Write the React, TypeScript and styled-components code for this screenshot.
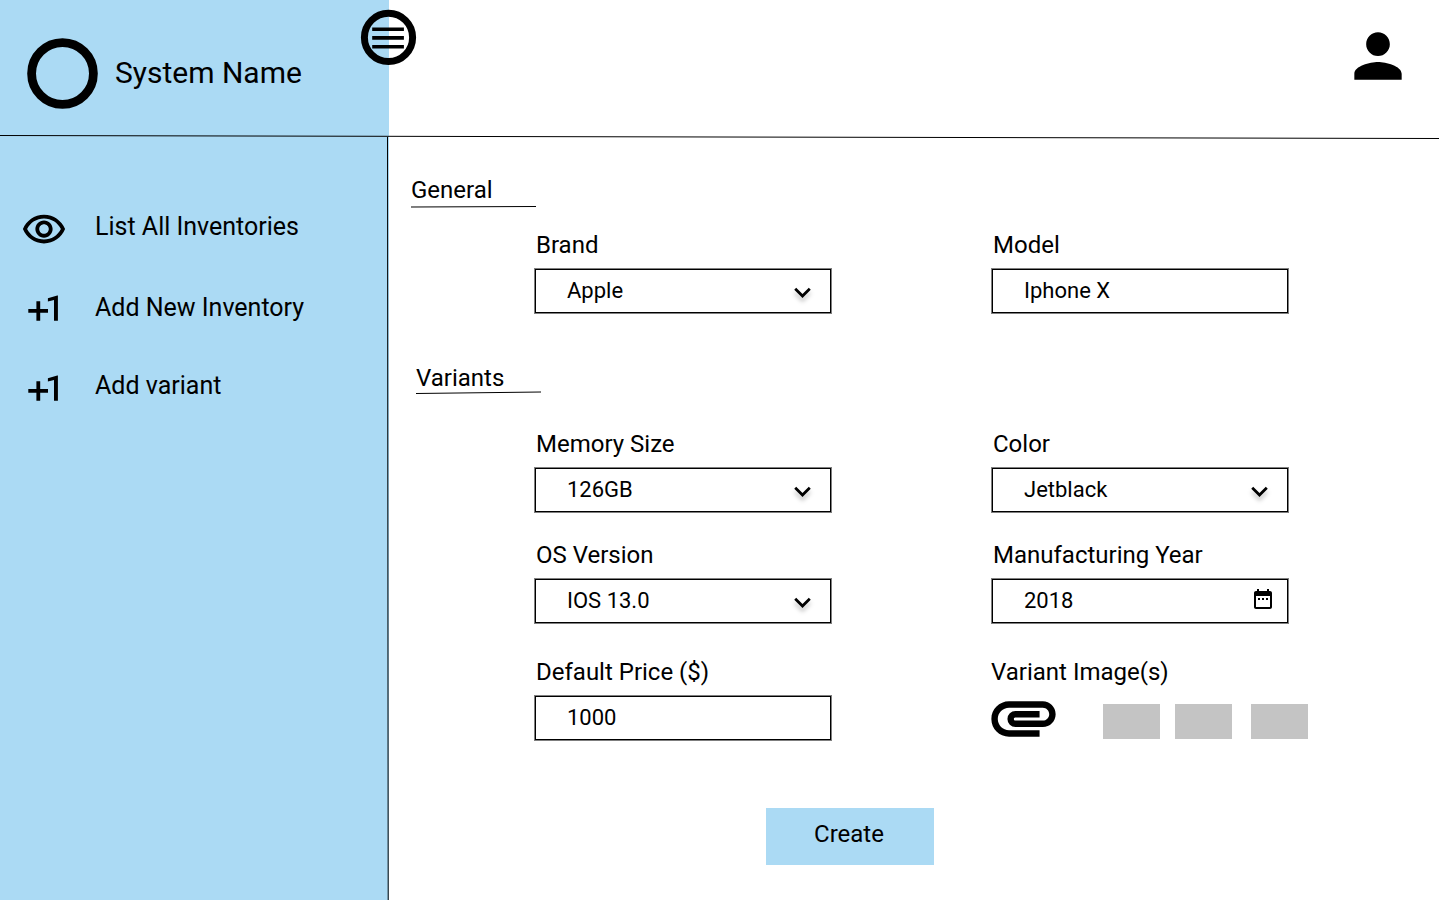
import React from 'react';
import styled, { createGlobalStyle } from 'styled-components';

const BLUE = '#abdaf4';

const GlobalStyle = createGlobalStyle`
  * { box-sizing: border-box; }
  html, body { margin: 0; background: #fff; overflow: hidden; }
  body { font-family: Roboto, sans-serif; color: #000; }
  svg { display: block; flex: none; }
`;

const Page = styled.div`
  position: relative;
  display: flex;
  width: 1440px;
  height: 900px;
  background: #fff;
`;

const Sidebar = styled.aside`
  display: flex;
  flex-direction: column;
  width: 389px;
  height: 900px;
  flex: none;
  background: ${BLUE};
`;

const Brand = styled.div`
  display: flex;
  height: 137px;
  padding: 38px 0 0 27px;
`;

const SystemName = styled.h1`
  margin: 17px 0 0 17px;
  font-size: 30px;
  line-height: 35px;
  font-weight: 400;
  white-space: nowrap;
`;

const Nav = styled.nav`
  display: flex;
  flex-direction: column;
  padding: 68px 0 0 21px;
`;

const NavItem = styled.a<{ $height: number }>`
  display: flex;
  height: ${(p) => p.$height}px;
`;

const NavIcon = styled.span<{ $top: number }>`
  width: 74px;
  padding-top: ${(p) => p.$top}px;
`;

const NavText = styled.span`
  padding-top: 7px;
  font-size: 25px;
  line-height: 29px;
  white-space: nowrap;
`;

const MenuButton = styled.button`
  position: absolute;
  left: 360px;
  top: 9px;
  padding: 0;
  border: 0;
  background: transparent;
`;

const Rules = styled.svg`
  position: absolute;
  left: 0;
  top: 0;
`;

const Main = styled.main`
  display: flex;
  flex-direction: column;
  width: 1051px;
`;

const TopBar = styled.header`
  display: flex;
  justify-content: flex-end;
  height: 137px;
  padding: 21px 27px 0 0;
`;

const Section = styled.section<{ $height: number; $top?: number }>`
  height: ${(p) => p.$height}px;
  padding-top: ${(p) => p.$top ?? 0}px;
`;

const SectionTitle = styled.h2<{ $indent: number }>`
  margin: 0 0 0 ${(p) => p.$indent}px;
  font-size: 24px;
  line-height: 28px;
  font-weight: 400;
`;

const Fields = styled.div<{ $top: number }>`
  display: grid;
  grid-template-columns: 296px 320px;
  column-gap: 161px;
  padding: ${(p) => p.$top}px 0 0 146px;
`;

const Field = styled.div<{ $height: number }>`
  display: flex;
  flex-direction: column;
  height: ${(p) => p.$height}px;
`;

const Label = styled.label<{ $indent?: number }>`
  margin: 0 0 10px ${(p) => p.$indent ?? 1}px;
  font-size: 24px;
  line-height: 28px;
  white-space: nowrap;
`;

const Box = styled.div<{ $end: number }>`
  display: flex;
  justify-content: space-between;
  width: 296px;
  height: 44px;
  padding: 0 ${(p) => p.$end}px 0 31px;
  border: 1px solid #000;
  box-shadow: 0 0 0 1px rgba(0, 0, 0, 0.5);
  font-size: 22px;
  line-height: 42px;
`;

const ChevronIcon = styled.svg`
  margin-top: 6px;
  filter: drop-shadow(0 4px 2px rgba(0, 0, 0, 0.25));
`;

const CalendarIcon = styled.svg`
  margin-top: 7px;
`;

const Attachments = styled.div`
  display: flex;
  align-items: flex-start;
  margin: 5px 0 0 -1px;
`;

const Thumb = styled.div<{ $gap: number }>`
  width: 57px;
  height: 35px;
  margin: 3px 0 0 ${(p) => p.$gap}px;
  background: #c4c4c4;
`;

const CreateButton = styled.button`
  width: 168px;
  height: 57px;
  margin-left: 377px;
  padding: 0 2px 5px 0;
  border: 0;
  background: ${BLUE};
  color: #000;
  font: 400 24px/28px Roboto, sans-serif;
`;

const Logo = () => (
  <svg width="71" height="71" viewBox="0 0 71 71" fill="none" stroke="#000">
    <circle cx="35.5" cy="35.5" r="30.9" strokeWidth="8.8" />
  </svg>
);

const Eye = () => (
  <svg width="46" height="46" viewBox="0 0 24 24">
    <path d="M12 6c3.79 0 7.17 2.13 8.82 5.5C19.17 14.87 15.79 17 12 17s-7.17-2.13-8.82-5.5C4.83 8.13 8.21 6 12 6m0-2C7 4 2.73 7.11 1 11.5 2.73 15.89 7 19 12 19s9.27-3.11 11-7.5C21.27 7.11 17 4 12 4zm0 5c1.38 0 2.5 1.12 2.5 2.5S13.38 14 12 14s-2.5-1.12-2.5-2.5S10.62 9 12 9m0-2c-2.48 0-4.5 2.02-4.5 4.5S9.52 16 12 16s4.5-2.02 4.5-4.5S14.48 7 12 7z" />
  </svg>
);

const PlusOne = () => (
  <svg width="46" height="46" viewBox="0 0 46 46">
    <path d="M15.4 15.2h3.8v7.8h7.8v3.7h-7.8v8h-3.800v-8H7.300V23h8.100zM36.900 34.700h-3.900V14.100l-6.100 1.500v-3.400l9.400-2.800h.6z" />
  </svg>
);

const Person = () => (
  <svg width="71" height="71" viewBox="-0.17 0.17 24 24">
    <path d="M12 12c2.21 0 4-1.79 4-4s-1.79-4-4-4-4 1.79-4 4 1.79 4 4 4zm0 2c-2.67 0-8 1.34-8 4v2h16v-2c0-2.66-5.33-4-8-4z" />
  </svg>
);

const MenuIcon = () => (
  <svg width="57" height="57" viewBox="0 0 57 57">
    <circle cx="28.5" cy="28.4" r="24.1" fill="none" stroke="#000" strokeWidth="7" />
    <path d="M12.2 18.4h31.7v3.6H12.2zM12.2 27.1h31.7v3.6H12.2zM12.2 35.9h31.7v3.6H12.2z" />
  </svg>
);

const Paperclip = () => (
  <svg width="65" height="36" viewBox="1.9 6.9 20.2 11.2">
    <path d="M2 12.5C2 9.46 4.46 7 7.5 7H18c2.21 0 4 1.79 4 4s-1.79 4-4 4H9.5a2.5 2.5 0 0 1 0-5H17v2H9.41c-.55 0-.55 1 0 1H18c1.1 0 2-.9 2-2s-.9-2-2-2H7.5C5.57 9 4 10.57 4 12.5S5.57 16 7.5 16H17v2H7.5C4.46 18 2 15.54 2 12.5z" />
  </svg>
);

const Chevron = () => (
  <ChevronIcon width="33" height="33" viewBox="0 0 24 24">
    <path d="M7.41 8.59 12 13.17l4.59-4.58L18 10l-6 6-6-6z" />
  </ChevronIcon>
);

const Calendar = () => (
  <CalendarIcon width="24" height="24" viewBox="0 0 24 24">
    <path d="M9 11H7v2h2v-2zm4 0h-2v2h2v-2zm4 0h-2v2h2v-2zm2-7h-1V2h-2v2H8V2H6v2H5c-1.11 0-1.99.9-1.99 2L3 20c0 1.1.89 2 2 2h14c1.1 0 2-.9 2-2V6c0-1.1-.9-2-2-2zm0 16H5V9h14v11z" />
  </CalendarIcon>
);

type InputProps = { label: string; value: string; height: number; icon?: 'chevron' | 'calendar' };

const Input = ({ label, value, height, icon }: InputProps) => (
  <Field $height={height}>
    <Label>{label}</Label>
    <Box $end={icon === 'calendar' ? 12 : 11}>
      <span>{value}</span>
      {icon === 'chevron' && <Chevron />}
      {icon === 'calendar' && <Calendar />}
    </Box>
  </Field>
);

export default function App() {
  return (
    <Page>
      <GlobalStyle />
      <Sidebar>
        <Brand>
          <Logo />
          <SystemName>System Name</SystemName>
        </Brand>
        <Nav>
          <NavItem $height={81}>
            <NavIcon $top={2}><Eye /></NavIcon>
            <NavText>List All Inventories</NavText>
          </NavItem>
          <NavItem $height={78}>
            <NavIcon $top={0}><PlusOne /></NavIcon>
            <NavText>Add New Inventory</NavText>
          </NavItem>
          <NavItem $height={78}>
            <NavIcon $top={2}><PlusOne /></NavIcon>
            <NavText>Add variant</NavText>
          </NavItem>
        </Nav>
      </Sidebar>
      <Main>
        <TopBar>
          <Person />
        </TopBar>
        <Section $height={227} $top={39}>
          <SectionTitle $indent={22}>General</SectionTitle>
          <Fields $top={27}>
            <Input label="Brand" value="Apple" height={82} icon="chevron" />
            <Input label="Model" value="Iphone X" height={82} />
          </Fields>
        </Section>
        <Section $height={444}>
          <SectionTitle $indent={27}>Variants</SectionTitle>
          <Fields $top={38}>
            <Input label="Memory Size" value="126GB" height={111} icon="chevron" />
            <Input label="Color" value="Jetblack" height={111} icon="chevron" />
            <Input label="OS Version" value="IOS 13.0" height={117} icon="chevron" />
            <Input label="Manufacturing Year" value="2018" height={117} icon="calendar" />
            <Input label="Default Price ($)" value="1000" height={82} />
            <Field $height={82}>
              <Label $indent={-1}>Variant Image(s)</Label>
              <Attachments>
                <Paperclip />
                <Thumb $gap={47} />
                <Thumb $gap={15} />
                <Thumb $gap={19} />
              </Attachments>
            </Field>
          </Fields>
        </Section>
        <CreateButton>Create</CreateButton>
      </Main>
      <Rules width="1440" height="900" fill="none" stroke="#000">
        <line x1="0" y1="135.5" x2="1439" y2="138.5" />
        <line x1="387.5" y1="137" x2="388.2" y2="900" />
        <line x1="411" y1="207" x2="536" y2="206.5" />
        <line x1="416" y1="393.5" x2="541" y2="392" />
      </Rules>
      <MenuButton aria-label="Menu">
        <MenuIcon />
      </MenuButton>
    </Page>
  );
}
